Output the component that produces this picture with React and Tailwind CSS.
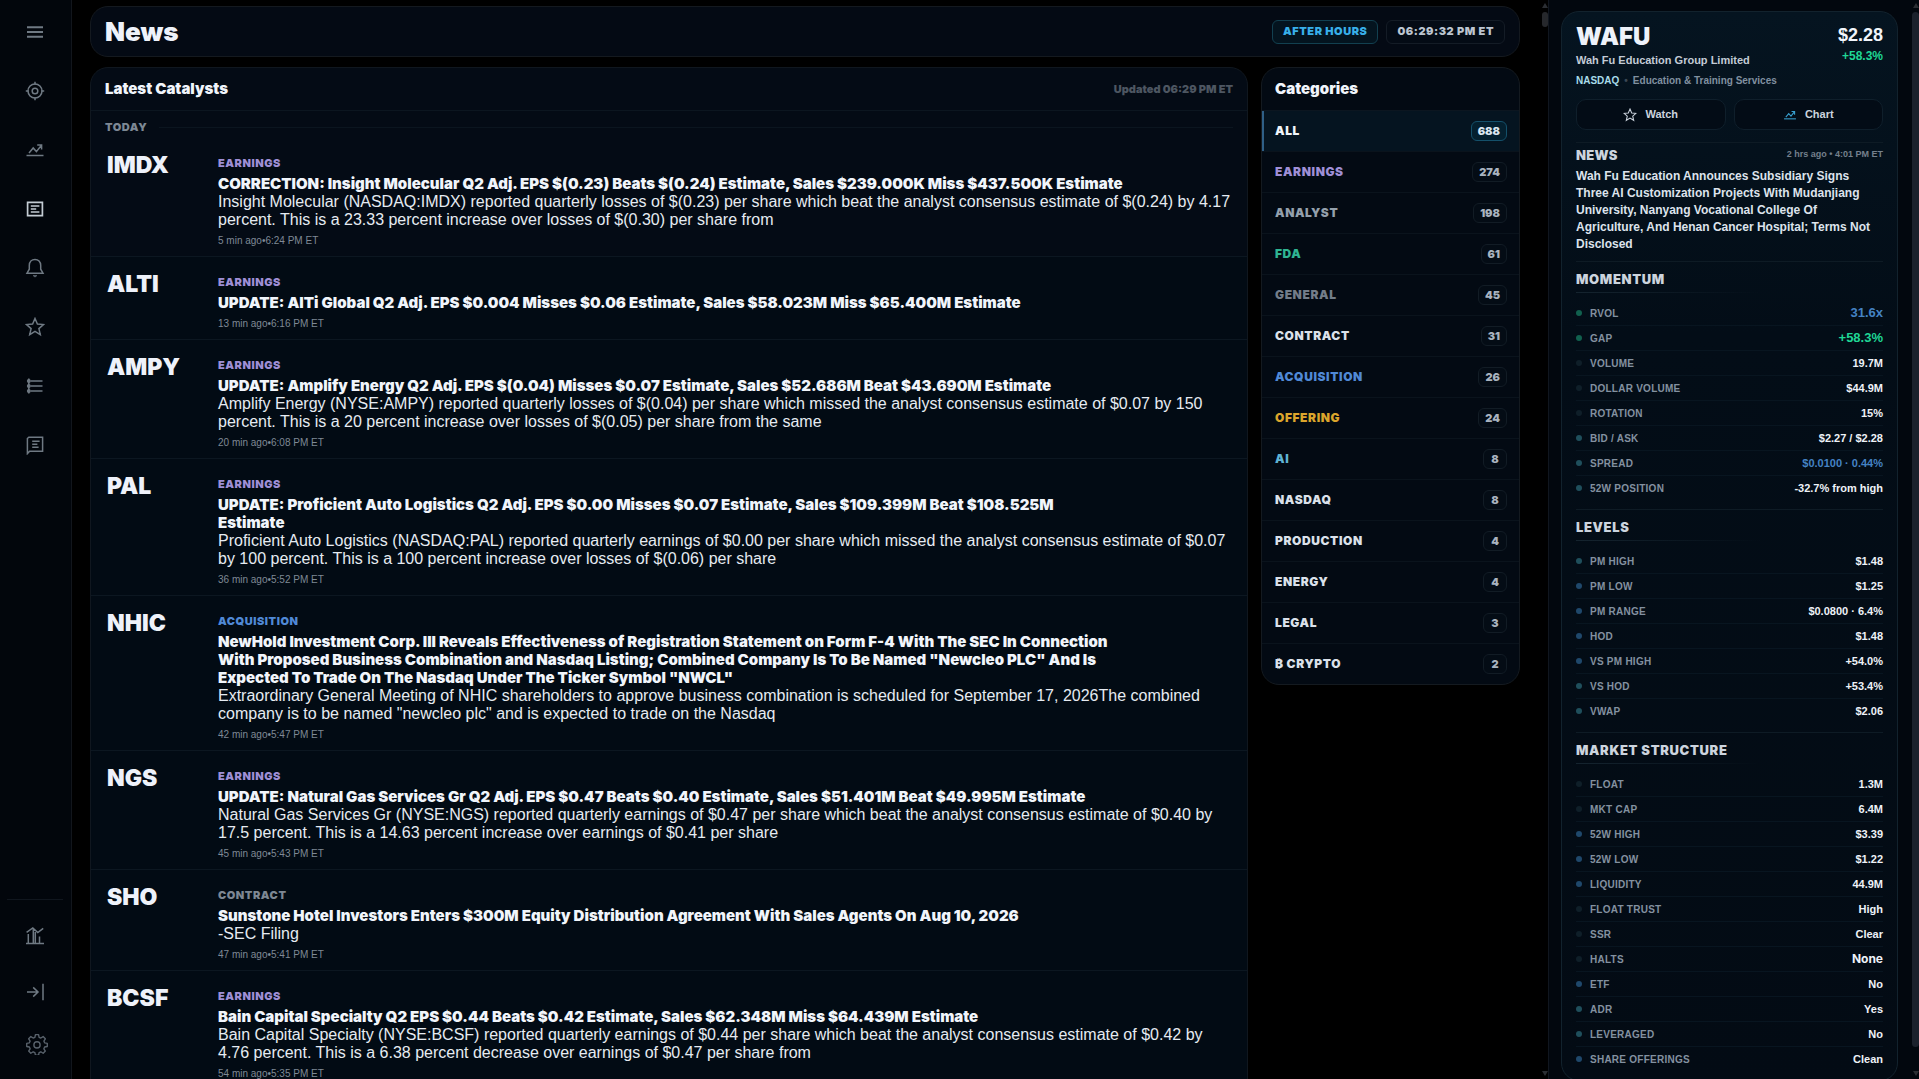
const heavy = 'font-["Inter",sans-serif] font-black';

const stroke = {
  width: 20,
  height: 20,
  viewBox: '0 0 20 20',
  fill: 'none',
  stroke: 'currentColor',
  strokeWidth: 1.5,
  'aria-hidden': true,
};

const MenuIcon = () => (
  <svg {...stroke} strokeWidth="1.9"><path d="M2 5.300h16M2 10h16M2 14.700h16" /></svg>
);
const TargetIcon = () => (
  <svg {...stroke}>
    <circle cx="10" cy="10" r="7" />
    <circle cx="10" cy="10" r="2.8" />
    <path d="M10 .8v3M10 16.2v3M.8 10h3M16.2 10h3" />
  </svg>
);
const TrendIcon = ({ size = 20 }) => (
  <svg {...stroke} width={size} height={size}>
    <path d="M1.5 15.5h17" />
    <path d="M4 13l4.2-5 3.2 3.6 5-6.4M12.2 5h4.4v4.6" />
  </svg>
);
const NewsIcon = () => (
  <svg {...stroke} strokeWidth="1.7">
    <path d="M2.6 3.4h14.8v13.2H2.6zM5.8 7h8.6M5.8 10h5.4M5.8 13h8.6" />
  </svg>
);
const BellIcon = () => (
  <svg {...stroke}>
    <path d="M2 15.2h16l-2.3-4V7.3C15.7 3.7 13.3 1.4 10 1.4S4.3 3.7 4.3 7.3v3.9z" />
    <path d="M8 17.6l2 1.5 2-1.5z" fill="currentColor" strokeWidth=".5" />
  </svg>
);
const StarIcon = ({ size = 20 }) => (
  <svg {...stroke} width={size} height={size}>
    <path d="M10 1.5l2.4 5.6 6.1.5-4.6 4 1.4 6-5.3-3.2-5.3 3.2 1.4-6-4.600-4 6.100-.5z" />
  </svg>
);
const ListIcon = () => (
  <svg {...stroke}>
    <path d="M3.8 2.500v15M5.500 5h12M5.500 10h12M5.500 15h12" />
    <circle cx="3.8" cy="5" r="1.2" />
    <circle cx="3.8" cy="10" r="1.2" />
    <circle cx="3.8" cy="15" r="1.2" />
  </svg>
);
const NoteIcon = () => (
  <svg {...stroke}>
    <path d="M2.4 18.6V3.500L3.800 2.200h13.800v14H4.600z" />
    <path d="M7.200 6.200h7.400M7.200 9.300h5.200M7.200 12.300h6.400" />
  </svg>
);
const ColumnsIcon = () => (
  <svg {...stroke}>
    <path d="M1 17.500h18M3.300 17V8M8.300 17V2.500M10.300 17V6M14.500 17v-6.500M1.600 6.400L7.800 2l5 4.600 5.400-4.200" />
  </svg>
);
const CollapseIcon = () => (
  <svg {...stroke}><path d="M2 10h10.800M8.200 5.400l4.800 4.600-4.800 4.600M18 1.800v16.400" /></svg>
);
const GearIcon = () => (
  <svg {...stroke} width="22" height="22" viewBox="0 0 24 24">
    <path d="M10.300 1.800h3.400l.6 2.900 1.900.8 2.500-1.600 2.400 2.400-1.600 2.500.8 1.900 2.900.6v3.400l-2.900.6-.8 1.900 1.600 2.500-2.400 2.400-2.500-1.600-1.900.8-.6 2.900h-3.400l-.6-2.900-1.900-.8-2.500 1.600-2.400-2.400 1.600-2.500-.8-1.900-2.900-.6v-3.400l2.900-.6.8-1.900-1.600-2.500 2.400-2.400 2.500 1.600 1.900-.8z" strokeLinejoin="round" />
    <circle cx="12" cy="13" r="3.4" />
  </svg>
);

const nav = [
  ['Menu', MenuIcon],
  ['Scanner', TargetIcon],
  ['Charts', TrendIcon],
  ['News', NewsIcon],
  ['Alerts', BellIcon],
  ['Favorites', StarIcon],
  ['Watchlists', ListIcon],
  ['Journal', NoteIcon],
];

const tone = {
  EARNINGS: 'text-[#9f8fd6]',
  ACQUISITION: 'text-[#5089d6]',
  CONTRACT: 'text-[#7d8793]',
};

const items = [
  ['IMDX', 'EARNINGS', 'CORRECTION: Insight Molecular Q2 Adj. EPS $(0.23) Beats $(0.24) Estimate, Sales $239.000K Miss $437.500K Estimate', 'Insight Molecular (NASDAQ:IMDX) reported quarterly losses of $(0.23) per share which beat the analyst consensus estimate of $(0.24) by 4.17 percent. This is a 23.33 percent increase over losses of $(0.30) per share from', '5 min ago', '6:24 PM ET'],
  ['ALTI', 'EARNINGS', 'UPDATE: AlTi Global Q2 Adj. EPS $0.004 Misses $0.06 Estimate, Sales $58.023M Miss $65.400M Estimate', '', '13 min ago', '6:16 PM ET'],
  ['AMPY', 'EARNINGS', 'UPDATE: Amplify Energy Q2 Adj. EPS $(0.04) Misses $0.07 Estimate, Sales $52.686M Beat $43.690M Estimate', 'Amplify Energy (NYSE:AMPY) reported quarterly losses of $(0.04) per share which missed the analyst consensus estimate of $0.07 by 150 percent. This is a 20 percent increase over losses of $(0.05) per share from the same', '20 min ago', '6:08 PM ET'],
  ['PAL', 'EARNINGS', 'UPDATE: Proficient Auto Logistics Q2 Adj. EPS $0.00 Misses $0.07 Estimate, Sales $109.399M Beat $108.525M\nEstimate', 'Proficient Auto Logistics (NASDAQ:PAL) reported quarterly earnings of $0.00 per share which missed the analyst consensus estimate of $0.07 by 100 percent. This is a 100 percent increase over losses of $(0.06) per share', '36 min ago', '5:52 PM ET'],
  ['NHIC', 'ACQUISITION', 'NewHold Investment Corp. III Reveals Effectiveness of Registration Statement on Form F-4 With The SEC In Connection With Proposed Business Combination and Nasdaq Listing; Combined Company Is To Be Named "Newcleo PLC" And Is Expected To Trade On The Nasdaq Under The Ticker Symbol "NWCL"', 'Extraordinary General Meeting of NHIC shareholders to approve business combination is scheduled for September 17, 2026The combined company is to be named "newcleo plc" and is expected to trade on the Nasdaq', '42 min ago', '5:47 PM ET'],
  ['NGS', 'EARNINGS', 'UPDATE: Natural Gas Services Gr Q2 Adj. EPS $0.47 Beats $0.40 Estimate, Sales $51.401M Beat $49.995M Estimate', 'Natural Gas Services Gr (NYSE:NGS) reported quarterly earnings of $0.47 per share which beat the analyst consensus estimate of $0.40 by 17.5 percent. This is a 14.63 percent increase over earnings of $0.41 per share', '45 min ago', '5:43 PM ET'],
  ['SHO', 'CONTRACT', 'Sunstone Hotel Investors Enters $300M Equity Distribution Agreement With Sales Agents On Aug 10, 2026', '-SEC Filing', '47 min ago', '5:41 PM ET'],
  ['BCSF', 'EARNINGS', 'Bain Capital Specialty Q2 EPS $0.44 Beats $0.42 Estimate, Sales $62.348M Miss $64.439M Estimate', 'Bain Capital Specialty (NYSE:BCSF) reported quarterly earnings of $0.44 per share which beat the analyst consensus estimate of $0.42 by 4.76 percent. This is a 6.38 percent decrease over earnings of $0.47 per share from', '54 min ago', '5:35 PM ET'],
];

const categories = [
  ['ALL', 688, 'text-[#f1f5f9]'],
  ['EARNINGS', 274, 'text-[#9f8fd6]'],
  ['ANALYST', 198, 'text-[#94a0ac]'],
  ['FDA', 61, 'text-[#2fb592]'],
  ['GENERAL', 45, 'text-[#737d89]'],
  ['CONTRACT', 31, 'text-[#dbe1ea]'],
  ['ACQUISITION', 26, 'text-[#5089d6]'],
  ['OFFERING', 24, 'text-[#dba52c]'],
  ['AI', 8, 'text-[#5fb3d3]'],
  ['NASDAQ', 8, 'text-[#dbe1ea]'],
  ['PRODUCTION', 4, 'text-[#dbe1ea]'],
  ['ENERGY', 4, 'text-[#dbe1ea]'],
  ['LEGAL', 3, 'text-[#dbe1ea]'],
  ['₿ CRYPTO', 2, 'text-[#dbe1ea]'],
];

const G = 'bg-[#11604e]';
const D = 'bg-[#0f1f29]';
const T = 'bg-[#1f4f5c]';
const B = 'bg-[#1f486b]';

const sections = [
  ['MOMENTUM', [
    ['RVOL', '31.6x', G, 'text-[13px] text-[#4583c4]'],
    ['GAP', '+58.3%', G, 'text-[13px] text-[#1fd695]'],
    ['VOLUME', '19.7M', D],
    ['DOLLAR VOLUME', '$44.9M', D],
    ['ROTATION', '15%', D],
    ['BID / ASK', '$2.27 / $2.28', T],
    ['SPREAD', '$0.0100 · 0.44%', T, 'text-[11px] text-[#4583c4]'],
    ['52W POSITION', '-32.7% from high', T],
  ]],
  ['LEVELS', [
    ['PM HIGH', '$1.48', T],
    ['PM LOW', '$1.25', B],
    ['PM RANGE', '$0.0800 · 6.4%', B],
    ['HOD', '$1.48', B],
    ['VS PM HIGH', '+54.0%', B],
    ['VS HOD', '+53.4%', T],
    ['VWAP', '$2.06', T],
  ]],
  ['MARKET STRUCTURE', [
    ['FLOAT', '1.3M', D],
    ['MKT CAP', '6.4M', D],
    ['52W HIGH', '$3.39', B],
    ['52W LOW', '$1.22', B],
    ['LIQUIDITY', '44.9M', B],
    ['FLOAT TRUST', 'High', D],
    ['SSR', 'Clear', D],
    ['HALTS', 'None', D, 'text-[12px] font-["Inter",sans-serif] font-black text-[#eef2f8]'],
    ['ETF', 'No', B],
    ['ADR', 'Yes', T],
    ['LEVERAGED', 'No', T],
    ['SHARE OFFERINGS', 'Clean', B],
  ]],
];

function Scrollbar({ children }) {
  return (
    <div aria-hidden="true" className="flex w-[7px] shrink-0 flex-col items-center gap-1 py-[3px]">
      <svg width="6" height="5" className="shrink-0 fill-[#2b2e33]"><path d="M3 0l3 5H0z" /></svg>
      {children}
      <svg width="6" height="5" className="mt-auto shrink-0 fill-[#2b2e33]"><path d="M0 0h6L3 5z" /></svg>
    </div>
  );
}

function Sidebar() {
  return (
    <nav className="flex w-[72px] shrink-0 flex-col items-center border-r border-[#12161c] bg-[#02060c] pt-[2px] pr-[2px] pb-[11px] text-[#6f7983]">
      {nav.map(([label, Icon]) => (
        <button key={label} aria-label={label} className={`flex h-[59px] w-full items-center justify-center ${label === 'News' ? 'text-[#c3cbd3]' : ''}`}>
          <Icon />
        </button>
      ))}
      <div className="mt-auto flex w-[56px] flex-col border-t border-[#10161e] pt-2">
        <button aria-label="Statistics" className="flex h-14 items-center justify-center"><ColumnsIcon /></button>
        <button aria-label="Collapse" className="flex h-14 items-center justify-center"><CollapseIcon /></button>
        <button aria-label="Settings" className="flex h-12 items-center justify-center pl-1 text-[#59626c]"><GearIcon /></button>
      </div>
    </nav>
  );
}

function NewsItem({ item, first }) {
  const [ticker, kind, title, body, ago, at] = item;
  return (
    <article className={`flex border-b border-[#0c1721] pt-[19px] pb-[9px] pl-4 pr-[13px] ${first ? 'bg-[#040b15]' : 'bg-[#020b14]'}`}>
      <a href={`#${ticker}`} className={`${heavy} w-[111px] shrink-0 text-[23px] leading-4 text-[#eef2fa]`}>{ticker}</a>
      <div className="min-w-0 flex-1">
        <p className={`${heavy} text-[11px] leading-3 tracking-wider ${tone[kind]}`}>{kind}</p>
        <h3 className={`${heavy} mt-[6px] max-w-[924px] text-[15px] leading-[18px] whitespace-pre-line text-[#f1f5fb]`}>{title}</h3>
        {body && <p className="text-base leading-[18px] text-[#e6ebf2]">{body}</p>}
        <p className="mt-[6px] text-[10px] leading-3 text-[#7f8995]">{ago}•{at}</p>
      </div>
    </article>
  );
}

function Detail() {
  return (
    <aside className="flex w-[371px] shrink-0 border-l border-[#10161f] bg-[#02070e]">
      <div className="min-w-0 flex-1 overflow-hidden pt-[11px] pr-[14px] pl-3">
        <div className="rounded-[18px] border border-[#12222d] bg-linear-to-b from-[#051420] via-[#030d17] via-30% to-[#030b14] px-[14px] pt-[10px]">
          <div className="flex justify-between">
            <div>
              <h2 className={`${heavy} text-2xl leading-[30px] text-[#eef2fa]`}>WAFU</h2>
              <p className="mt-px text-[11px] leading-[14px] font-bold text-[#c3cbd6]">Wah Fu Education Group Limited</p>
            </div>
            <div className="text-right font-bold">
              <p className="text-lg leading-[26px] text-[#f1f5fb]">$2.28</p>
              <p className="text-[12px] leading-4 text-[#1fd695]">+58.3%</p>
            </div>
          </div>
          <p className="mt-[7px] flex gap-[5px] text-[10px] leading-[14px] font-bold text-[#8090a0]">
            <span className="text-[#a8dcea]">NASDAQ</span><span className="text-[#3b4753]">•</span><span>Education &amp; Training Services</span>
          </p>
          <div className="mt-[11px] grid grid-cols-2 gap-2 text-[11px] font-bold text-[#ccd4de]">
            <button className="flex h-[31px] items-center justify-center gap-2 rounded-[10px] border border-[#0f1f2b] bg-[#030c16]"><StarIcon size={14} />Watch</button>
            <button className="flex h-[31px] items-center justify-center gap-2 rounded-[10px] border border-[#0f1f2b] bg-[#030c16]"><span className="text-[#38a0d0]"><TrendIcon size={14} /></span>Chart</button>
          </div>
          <section className="mt-3 border-t border-[#0e1b25] pt-1 pb-2">
            <div className="flex items-center justify-between">
              <h3 className={`${heavy} text-[13px] leading-4 tracking-wide text-[#ccd4de]`}>NEWS</h3>
              <span className="text-[9px] font-bold text-[#74808c]">2 hrs ago • 4:01 PM ET</span>
            </div>
            <p className="mt-[5px] text-[12px] leading-[17px] font-bold text-[#dde3ec]">
              Wah Fu Education Announces Subsidiary Signs Three AI Customization Projects With Mudanjiang University, Nanyang Vocational College Of Agriculture, And Henan Cancer Hospital; Terms Not Disclosed
            </p>
          </section>
          {sections.map(([name, rows]) => (
            <section key={name} className="border-t border-[#0e1b25] pt-[10px] pb-2">
              <h3 className={`${heavy} text-[13px] leading-[14px] tracking-wider text-[#ccd4de]`}>{name}</h3>
              <div className="mt-[6px] mb-2 h-px bg-linear-to-r from-[#15242f] to-transparent to-60%" />
              <dl>
                {rows.map(([label, value, dot, cls]) => (
                  <div key={label} className="flex h-[25px] items-center border-b border-[#081520] last:border-transparent">
                    <span className={`mr-2 size-[6px] rounded-full ${dot}`} />
                    <dt className="text-[10px] font-bold tracking-wide text-[#8391a0]">{label}</dt>
                    <dd className={`ml-auto font-bold ${cls || 'text-[11px] text-[#eef2f8]'}`}>{value}</dd>
                  </div>
                ))}
              </dl>
            </section>
          ))}
        </div>
      </div>
      <Scrollbar><div className="-mb-1 h-[96.5%] w-[7px] rounded-full bg-[#1b212c]" /></Scrollbar>
    </aside>
  );
}

export default function App() {
  return (
    <div className='flex h-screen overflow-hidden bg-black font-["Liberation_Sans",Arial,sans-serif] text-white'>
      <Sidebar />
      <main className="flex min-w-0 flex-1 flex-col gap-[10px] overflow-hidden pt-[6px] pr-[21px] pl-[18px]">
        <header className="flex h-[51px] shrink-0 items-center justify-between rounded-[18px] border border-[#14191f] bg-[#040a14] px-[14px]">
          <h1 className={`${heavy} text-[26px] text-[#eef2fa]`}>News</h1>
          <div className={`${heavy} flex gap-2 text-[11px] tracking-wider`}>
            <span className="flex h-6 items-center rounded-md border border-[#124050] bg-[#04141f] px-[10px] text-[#38b0ea]">AFTER HOURS</span>
            <span className="flex h-6 items-center rounded-md border border-[#141c26] bg-[#040b15] px-[10px] text-[#bcc5d0]">06:29:32 PM ET</span>
          </div>
        </header>
        <div className="flex min-h-0 flex-1 items-start gap-[13px]">
          <section className="min-w-0 flex-1 overflow-hidden rounded-t-[18px] border border-[#10171f] bg-[#040b15]">
            <div className={`${heavy} flex h-[43px] items-center justify-between border-b border-[#0c1620] px-[14px]`}>
              <h2 className="text-[15px] text-[#f1f5fb]">Latest Catalysts</h2>
              <span className="text-[11px] text-[#4d5661]">Updated 06:29 PM ET</span>
            </div>
            <div className="flex h-[27px] items-center gap-3 px-[14px] pt-[6px]">
              <span className={`${heavy} text-[11px] tracking-wider text-[#7d8894]`}>TODAY</span>
              <span className="h-px flex-1 bg-[#0b151f]" />
            </div>
            {items.map((item, i) => <NewsItem key={item[0]} item={item} first={i === 0} />)}
          </section>
          <section className="w-[259px] shrink-0 overflow-hidden rounded-[18px] border border-[#141a20] bg-[#030a13]">
            <h2 className={`${heavy} flex h-[43px] items-center border-b border-[#0c1620] px-[13px] text-[15px] text-[#f1f5fb]`}>Categories</h2>
            <ul>
              {categories.map(([name, count, color], i) => (
                <li key={name} className="border-b border-[#0a131c] last:border-b-0">
                  <button className={`${heavy} flex h-10 w-full items-center justify-between border-l-2 pr-3 pl-[11px] text-[12px] tracking-wider ${color} ${i === 0 ? 'border-[#2f5f86] bg-[#051420]' : 'border-transparent'}`}>
                    {name}
                    <span className={`flex h-5 min-w-6 items-center justify-center rounded-md border px-[6px] text-[11px] tracking-normal ${i === 0 ? 'border-[#14506a] bg-[#04202f] text-[#dbe6f0]' : 'border-[#121c25] bg-[#040c15] text-[#a9b3bf]'}`}>{count}</span>
                  </button>
                </li>
              ))}
            </ul>
          </section>
        </div>
      </main>
      <Scrollbar><div className="h-[15px] w-[6px] rounded-full bg-[#26282c]" /></Scrollbar>
      <Detail />
    </div>
  );
}
